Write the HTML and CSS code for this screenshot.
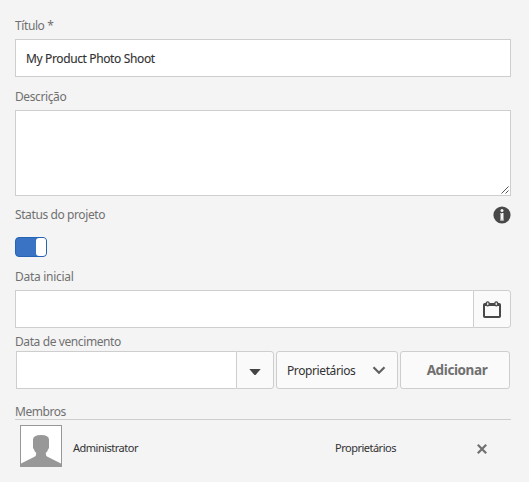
FILE: index.html
```html
<!DOCTYPE html>
<html lang="pt">
<head>
<meta charset="utf-8">
<title>Projeto</title>
<link rel="stylesheet" href="styles.css">
</head>
<body>
<form class="form">
  <label class="label label-title"><span>Título *</span></label>
  <div class="field field-title"><span class="t-title">My Product Photo Shoot</span></div>
  <label class="label label-desc"><span>Descrição</span></label>
  <div class="field area">
    <svg class="grip" width="8" height="8" viewBox="0 0 8 8"><path d="M.5 7.500l7-7M4.500 7.500l3-3" stroke="#555" fill="none"/></svg>
  </div>
  <div class="status-row">
    <label class="label label-status"><span>Status do projeto</span></label>
    <svg class="info" width="18" height="18" viewBox="0 0 18 18"><circle cx="9" cy="9" r="8.600" fill="#484848"/><circle cx="9" cy="4.400" r="1.500" fill="#f4f4f4"/><path d="M7.500 7h3v7.500h-3z" fill="#f4f4f4"/><path d="M7 7h2v1H7zM7 13.600h4v.9H7z" fill="#bbb"/></svg>
  </div>
  <div class="switch"><span class="knob"></span></div>
  <label class="label label-start"><span>Data inicial</span></label>
  <div class="group">
    <div class="field group-input"></div>
    <div class="button group-button">
      <svg width="18" height="17" viewBox="0 0 18 17"><rect x="1" y="3" width="16" height="13" rx=".8" fill="none" stroke="#484848" stroke-width="2"/><path d="M1 3h16v2H1z" fill="#484848"/><rect x="3.300" y=".8" width="2.800" height="4" rx="1.300" fill="#ddd" stroke="#484848" stroke-width="1.200"/><rect x="11.900" y=".8" width="2.800" height="4" rx="1.300" fill="#ddd" stroke="#484848" stroke-width="1.200"/></svg>
    </div>
  </div>
  <label class="label label-due"><span>Data de vencimento</span></label>
  <div class="member-add">
    <div class="group member-search">
      <div class="field group-input"></div>
      <div class="button group-button"><svg class="caret" width="12" height="6" viewBox="0 0 12 6"><path d="M.3 0h11.400L7 5.400q-1 1-2 0z" fill="#444"/></svg></div>
    </div>
    <div class="button select"><span class="t-role">Proprietários</span><svg width="14" height="9" viewBox="0 0 14 9"><path d="M1.500 1.300L7 6.800l5.500-5.500" fill="none" stroke="#606060" stroke-width="2.200"/></svg></div>
    <div class="button add"><span class="t-add">Adicionar</span></div>
  </div>
  <div class="label label-members"><span>Membros</span></div>
  <div class="member">
    <svg class="avatar" width="42" height="42" viewBox="0 0 42 42"><rect x=".5" y=".5" width="41" height="41" fill="#fff" stroke="#989898"/><path d="M1 41V38.500L14 32Q16.500 31 16.300 28Q14.500 26.500 14 24.500Q12.500 23 13 20V14.500Q13.200 10 21 10T29 14.500V20Q29.500 23 28 24.500Q27.500 26.500 25.700 28Q25.500 31 28 32L41 38.500V41Z" fill="#989898"/></svg>
    <span class="name">Administrator</span>
    <span class="role">Proprietários</span>
    <svg class="remove" width="10" height="10" viewBox="0 0 10 10"><path d="M.8.8l8.400 8.400M9.200.8L.8 9.200" stroke="#707070" stroke-width="2.200"/></svg>
  </div>
</form>
</body>
</html>
```
FILE: styles.css
```css
* { box-sizing: border-box; }
body {
  margin: 0;
  height: 482px;
  background: #f4f4f4;
  font: 12px/18px "Noto Sans", "Open Sans", sans-serif;
  letter-spacing: -0.4px;
  color: #323232;
  overflow: hidden;
}
svg { display: block; flex: none; }
.form { display: flex; flex-direction: column; width: 511px; padding: 17px 0 0 15px; }
.label { display: block; height: 18px; color: #707070; white-space: nowrap; }
.field { background: #fff; border: 1px solid #cecece; }
.field-title { height: 38px; margin-top: 4px; padding: 10px; white-space: nowrap; letter-spacing: -0.37px; -webkit-text-stroke: .1px; }
.label-desc { margin-top: 11px; }
.area { height: 86px; margin-top: 4px; display: flex; align-items: flex-end; justify-content: flex-end; padding: 1px; }
.status-row { display: flex; justify-content: space-between; height: 18px; margin-top: 10px; }
.switch { display: flex; justify-content: flex-end; width: 32px; height: 20px; margin-top: 13px; border: 1px solid #2563b6; border-radius: 4px; background: #3a72c4; }
.knob { width: 10px; height: 18px; border-radius: 3px; background: #fff; }
.label-start { margin-top: 11px; letter-spacing: -0.28px; }
.group { display: flex; height: 38px; margin-top: 4px; }
.group-input { flex: 1; border-right: 0; }
.button { display: flex; align-items: center; justify-content: center; height: 38px; background: #fafafa; border: 1px solid #cecece; border-radius: 3px; white-space: nowrap; }
.group-button { width: 38px; border-radius: 0 3px 3px 0; }
.label-due { margin-top: 5px; }
.member-add { display: flex; gap: 2px; margin: 0 1px; }
.member-search { width: 258px; margin-top: 0; }
.caret { margin-top: 3px; }
.select { width: 122px; justify-content: space-between; padding: 0 11px 0 10px; }
.t-role { padding-top: 1px; }
.add { width: 110px; padding-left: 4px; color: #707070; font-size: 13.5px; font-weight: 700; }
.label-members { margin-top: 14px; letter-spacing: -0.45px; }
.member { display: flex; align-items: center; height: 48px; margin-top: -2px; padding: 5px 24px 0 5px; border-top: 1px solid #cecece; font-size: 11px; letter-spacing: -0.5px; }
.name { width: 262px; margin-left: 11px; padding-top: 4px; }
.role { flex: 1; padding-top: 4px; }
.remove { margin-top: 6px; }
```
